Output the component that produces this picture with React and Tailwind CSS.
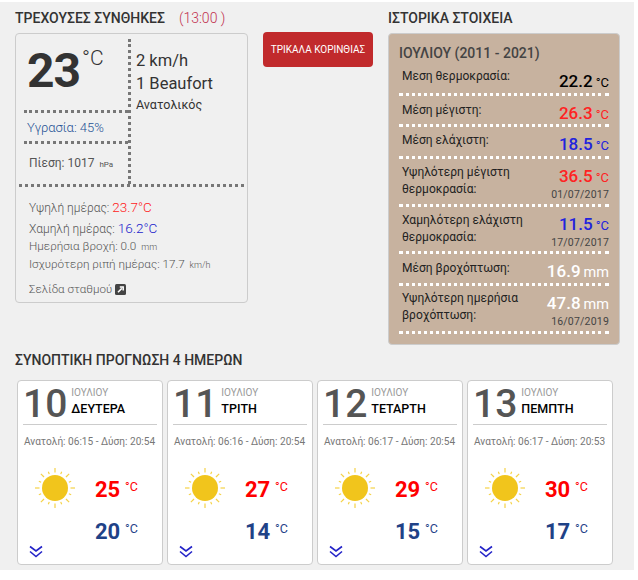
const days = [
  { d: '10', name: 'ΔΕΥΤΕΡΑ', rise: '06:15', set: '20:54', hi: 25, lo: 20 },
  { d: '11', name: 'ΤΡΙΤΗ', rise: '06:16', set: '20:54', hi: 27, lo: 14 },
  { d: '12', name: 'ΤΕΤΑΡΤΗ', rise: '06:17', set: '20:54', hi: 29, lo: 15 },
  { d: '13', name: 'ΠΕΜΠΤΗ', rise: '06:17', set: '20:53', hi: 30, lo: 17 },
];

const rays = [0, 22.5, 45, 67.5, 90, 112.5, 135, 157.5, 180, 202.5, 225, 247.5, 270, 292.5, 315, 337.5];

function Sun() {
  return (
    <svg width="42" height="42" viewBox="-21 -21 42 42" className="shrink-0">
      {rays.map((r, i) => (
        <line key={r} x1="0" y1={i % 2 ? -15 : -15.5} x2="0" y2={i % 2 ? -17.5 : -20} stroke="#f5d247" strokeWidth="1.2" transform={`rotate(${r})`} />
      ))}
      <circle r="13" fill="#f1c51c" />
    </svg>
  );
}

function Chevrons() {
  return (
    <svg width="14" height="13" viewBox="0 0 14 13" fill="none" stroke="#2323c8" strokeWidth="1.6">
      <polyline points="1,1.5 7,6 13,1.5" />
      <polyline points="1,6.5 7,11.5 13,6.5" />
    </svg>
  );
}

function Stat({ value, unit, color, date }) {
  return (
    <div className="w-[73px] text-right shrink-0 pt-[7px]">
      <div className={`leading-[20px] whitespace-nowrap ${color}`}>
        <span className="text-[17px] font-medium">{value}</span>
        <span className={unit === 'mm' ? 'text-[14.5px] ml-[3px]' : 'text-[13px] ml-[3px]'}>{unit === 'mm' ? 'mm' : '°C'}</span>
      </div>
      {date && <div className="text-[10.5px] leading-[13px] text-[#444] tracking-[0.2px]">{date}</div>}
    </div>
  );
}

function HistRow({ label, h, pt = 'pt-[5px]', ...stat }) {
  return (
    <div className={`flex justify-between border-b-[3px] border-dotted border-white pl-[3px] ${h}`}>
      <div className={`text-[12px] leading-[17px] text-[#222] whitespace-pre-line ${pt}`}>{label}</div>
      <Stat {...stat} />
    </div>
  );
}

function DayCard({ d, name, rise, set, hi, lo }) {
  return (
    <div className="w-[146px] h-[185px] bg-white border border-[#ccc] rounded-[4px] px-[5px] flex flex-col">
      <div className="flex h-[44px] border-b border-[#ccc]">
        <div className="text-[39px] font-medium text-[#555] leading-[46px] mr-[4px]">{d}</div>
        <div className="pt-[6px]">
          <div className="text-[10px] text-[#999] leading-[12px]">ΙΟΥΛΙΟΥ</div>
          <div className="text-[12.5px] font-medium text-black leading-[16px] mt-[2px]">{name}</div>
        </div>
      </div>
      <div className="text-[10.1px] text-[#777] leading-[12px] mt-[11px] pl-[1px] whitespace-nowrap">Ανατολή: {rise} - Δύση: {set}</div>
      <div className="flex mt-[19px] pl-[11px]">
        <div className="w-[61px]"><Sun /></div>
        <div className="pt-[10px]">
          <div className="flex text-[#f00] h-[42px]">
            <span className="text-[22px] font-bold leading-[26px] w-[31px]">{hi}</span>
            <span className="text-[12.5px] leading-[14px] mt-[3px] -ml-[1px]">°C</span>
          </div>
          <div className="flex text-[#1f4287]">
            <span className="text-[22px] font-bold leading-[26px] w-[31px]">{lo}</span>
            <span className="text-[12.5px] leading-[14px] mt-[3px] -ml-[1px]">°C</span>
          </div>
        </div>
      </div>
      <div className="pl-[6px]"><Chevrons /></div>
    </div>
  );
}

export default function App() {
  return (
    <div className="font-['Roboto',sans-serif] bg-white h-[580px] pt-[2px]">
      <div className="w-[634px] h-[568px] bg-[#f0f0f0]">
        <div className="flex h-[343px]">
          <div className="w-[233px] ml-[15px] shrink-0">
            <div className="h-[31px] pt-[1px] flex items-center whitespace-nowrap">
              <span className="text-[14px] font-medium text-[#333]">ΤΡΕΧΟΥΣΕΣ ΣΥΝΘΗΚΕΣ</span>
              <span className="text-[14px] font-light text-[#c2314f] ml-[14px]">(13:00 )</span>
            </div>
            <div className="h-[270px] border border-[#ccc] rounded-[4px] pt-[5px]">
              <div className="flex h-[148px] mx-[3px] border-b-[3px] border-dotted border-[#777]">
                <div className="w-[109px] pl-[5px] pt-[4px]">
                  <div className="flex h-[67px] pl-[3px] text-[#333]">
                    <span className="text-[48px] font-bold leading-[56px] tracking-[-1px]">23</span>
                    <span className="text-[21px] font-light leading-[24px] ml-[2px] mt-[3px]">°C</span>
                  </div>
                  <div className="h-[34px] border-y-[3px] border-dotted border-[#777] text-[13px] font-light text-[#1f5295] leading-[29px] pl-[3px]">Υγρασία: 45%</div>
                  <div className="text-[12px] text-[#555] leading-[14px] mt-[12px] pl-[5px]">Πίεση: 1017 <span className="text-[8px] ml-[2px]">hPa</span></div>
                </div>
                <div className="border-l-[3px] border-dotted border-[#777] pl-[5px] pt-[10px] text-[#333]">
                  <div className="text-[16.5px] leading-[23px]">2 km/h</div>
                  <div className="text-[16.5px] leading-[23px]">1 Beaufort</div>
                  <div className="text-[12.5px] leading-[17px] mt-[1px]">Ανατολικός</div>
                </div>
              </div>
              <div className="pl-[13px] pt-[10px] text-[#555] font-light">
                <div className="text-[12px] leading-[20px] h-[21px]">Υψηλή ημέρας: <span className="text-[13.5px] text-[#f22]">23.7°C</span></div>
                <div className="text-[12px] leading-[20px] h-[20px]">Χαμηλή ημέρας: <span className="text-[13.5px] text-[#22c]">16.2°C</span></div>
                <div className="text-[11.7px] leading-[17px]">Ημερήσια βροχή: 0.0 <span className="text-[9px] ml-[2px]">mm</span></div>
                <div className="text-[11.7px] leading-[17px] whitespace-nowrap">Ισχυρότερη ριπή ημέρας: 17.7 <span className="text-[9px] ml-[2px]">km/h</span></div>
                <div className="flex items-center text-[11.6px] leading-[16px] mt-[7px]">
                  Σελίδα σταθμού
                  <svg width="11" height="11" viewBox="0 0 11 11" className="ml-[3px]">
                    <rect width="11" height="11" rx="1.5" fill="#444" />
                    <path d="M3 8.2 L6.8 4.4 M4.8 3 H8.2 V6.4" stroke="#fff" strokeWidth="1.5" fill="none" />
                  </svg>
                </div>
              </div>
            </div>
          </div>

          <div className="w-[110px] ml-[15px] pt-[30px] shrink-0">
            <div className="h-[35px] bg-[#c12a2c] rounded-[4px] text-white text-[10px] flex items-center justify-center whitespace-nowrap">ΤΡΙΚΑΛΑ ΚΟΡΙΝΘΙΑΣ</div>
          </div>

          <div className="w-[232px] ml-[15px] shrink-0">
            <div className="h-[31px] pt-[1px] flex items-center text-[14px] font-medium text-[#333] whitespace-nowrap">ΙΣΤΟΡΙΚΑ ΣΤΟΙΧΕΙΑ</div>
            <div className="h-[312px] bg-[#c7b29f] rounded-[4px] border border-[#ccc] px-[10px] pt-[10px]">
              <div className="text-[14px] font-medium text-[#444] leading-[18px] mb-[2px]">ΙΟΥΛΙΟΥ (2011 - 2021)</div>
              <HistRow label="Μεση θερμοκρασία:" value="22.2" color="text-black" h="h-[32px]" pt="pt-[4px]" />
              <HistRow label="Μέση μέγιστη:" value="26.3" color="text-[#f22]" h="h-[31px]" pt="pt-[6px]" />
              <HistRow label="Μέση ελάχιστη:" value="18.5" color="text-[#22d]" h="h-[32px]" />
              <HistRow label={'Υψηλότερη μέγιστη\nθερμοκρασία:'} value="36.5" color="text-[#f22]" date="01/07/2017" h="h-[48px]" />
              <HistRow label={'Χαμηλότερη ελάχιστη\nθερμοκρασία:'} value="11.5" color="text-[#22d]" date="17/07/2017" h="h-[47px]" />
              <HistRow label="Μέση βροχόπτωση:" value="16.9" unit="mm" color="text-white" h="h-[32px]" pt="pt-[6px]" />
              <HistRow label={'Υψηλότερη ημερήσια\nβροχόπτωση:'} value="47.8" unit="mm" color="text-white" date="16/07/2019" h="h-[48px]" pt="pt-[4px]" />
            </div>
          </div>
        </div>

        <div className="pl-[15px] text-[14px] font-medium text-[#333] leading-[16px] mt-[7px]">ΣΥΝΟΠΤΙΚΗ ΠΡΟΓΝΩΣΗ 4 ΗΜΕΡΩΝ</div>
        <div className="flex gap-[4px] pl-[17px] mt-[12px]">
          {days.map(x => <DayCard key={x.d} {...x} />)}
        </div>
      </div>
    </div>
  );
}
